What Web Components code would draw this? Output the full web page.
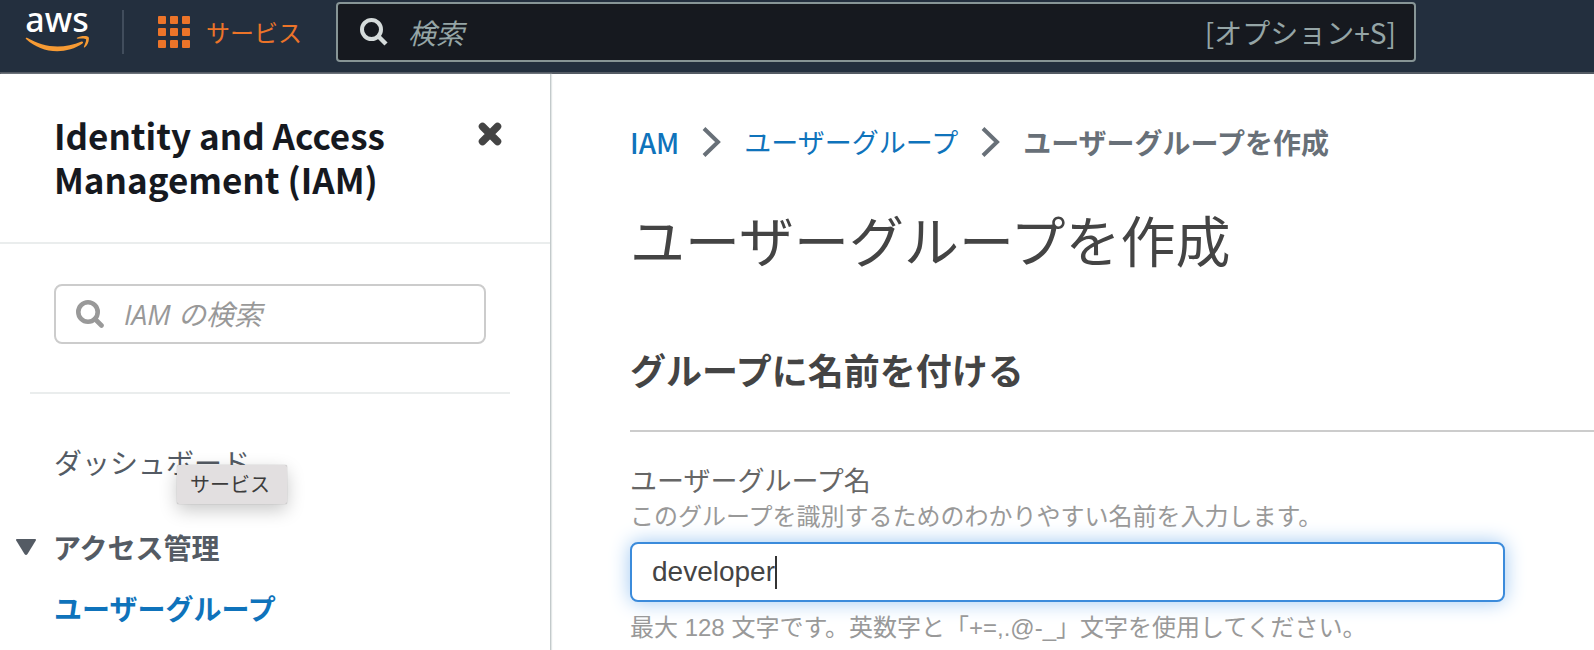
<!DOCTYPE html>
<html lang="ja">
<head>
<meta charset="utf-8">
<meta name="viewport" content="width=device-width, initial-scale=1">
<title>ユーザーグループを作成 | IAM</title>
<style>
  html, body { height: 100%; }
  body {
    margin: 0;
    overflow: hidden;
    background: #fff;
    color: #444;
    font-family: "Noto Sans CJK JP", "Noto Sans", sans-serif;
    font-size: 28px;
    line-height: 40px;
  }
</style>
</head>
<body>
<iam-console></iam-console>

<script>
function define(name, html) {
  const template = document.createElement('template');
  template.innerHTML = html;
  customElements.define(name, class extends HTMLElement {
    constructor() {
      super();
      this.attachShadow({ mode: 'open' }).append(template.content.cloneNode(true));
    }
  });
}

define('aws-logo', `
  <style>
    :host { display: block; width: 64px; height: 44px; }
    svg { display: block; overflow: visible; }
    text { font: 500 34px "Noto Sans", sans-serif; fill: #fff; }
  </style>
  <svg width="64" height="44" viewBox="0 0 64 44">
    <text x="33" y="22" text-anchor="middle">aws</text>
    <path fill="#f79b34" d="M1.800 28.100c.4-.6 1-.4 1.700 0C12.500 33.200 23 36.600 33.500 36.600c8 0 16-1.600 24-5 1.300-.5 2.300.9 1 1.900C51.500 38.600 41.800 41.200 33.300 41.200c-12 0-22.800-4.600-31-12-.5-.4-.8-.7-.5-1.100z"/>
    <path fill="#f79b34" d="M53 27.800c3.200-1.900 7.800-2.100 10.600-1.400 1 .2 1.400 1.100 1.300 2.600-.2 3.400-1.700 6.300-4 8.300-.7.500-1.300.2-1-.5 1-2.500 2.700-6.600 2.100-7.600-.7-1.100-5.400-.9-8.300-.5-.9.100-1.300-.5-.7-.9z"/>
  </svg>
`);

define('console-nav', `
  <style>
    :host {
      display: flex; align-items: center; box-sizing: border-box;
      height: 74px; padding: 0 24px 8px;
      background: #232f3e; border-bottom: 2px solid #545b64;
    }
    .rule { width: 2px; height: 44px; margin: 0 34px; background: #414d5c; }
    button {
      display: flex; align-items: center; gap: 16px; padding: 0; border: 0;
      background: none; color: #ec7429; font: inherit; font-size: 24px; line-height: 32px;
    }
    svg { display: block; flex: none; }
    label {
      flex: 0 1 1080px; display: flex; align-items: center; box-sizing: border-box;
      height: 60px; margin-left: 34px; padding: 0 18px 0 22px;
      border: 2px solid #879596; border-radius: 4px; background: #16191f; color: #95a5a6;
    }
    input {
      flex: 1; min-width: 0; padding: 0; margin-left: 20px; border: 0; outline: 0;
      background: none; color: inherit; font: inherit;
    }
    input::placeholder { color: #95a5a6; opacity: 1; font-style: italic; }
    .key { white-space: nowrap; }
  </style>
  <aws-logo></aws-logo>
  <div class="rule"></div>
  <button type="button">
    <svg width="32" height="32" viewBox="0 0 32 32" fill="currentColor">
      <rect width="8" height="8" rx="1"/><rect x="12" width="8" height="8" rx="1"/><rect x="24" width="8" height="8" rx="1"/>
      <rect y="12" width="8" height="8" rx="1"/><rect x="12" y="12" width="8" height="8" rx="1"/><rect x="24" y="12" width="8" height="8" rx="1"/>
      <rect y="24" width="8" height="8" rx="1"/><rect x="12" y="24" width="8" height="8" rx="1"/><rect x="24" y="24" width="8" height="8" rx="1"/>
    </svg>
    <span>サービス</span>
  </button>
  <label>
    <svg width="28" height="28" viewBox="0 0 28 28" fill="none" stroke="#d5dbdb">
      <circle cx="11.500" cy="11.500" r="9.500" stroke-width="4"/><path d="M18 18l8 8" stroke-width="4.500"/>
    </svg>
    <input type="search" placeholder="検索" aria-label="検索">
    <span class="key">[オプション+S]</span>
  </label>
`);

define('side-nav', `
  <style>
    :host {
      display: flex; flex-direction: column; box-sizing: border-box; width: 551px; flex: none;
      border-right: 1px solid #c3cacb; box-shadow: 1px 0 1px #e3e7e7;
    }
    header {
      display: flex; justify-content: space-between; align-items: flex-start;
      padding: 39px 48px 41px 54px; border-bottom: 2px solid #eaeded;
    }
    h2 { margin: 0; font-size: 35px; line-height: 44px; font-weight: 700; color: #16191f; }
    header button { display: block; padding: 9px 0; border: 0; background: none; }
    svg { display: block; flex: none; }
    label {
      display: flex; align-items: center; box-sizing: border-box; height: 60px;
      margin: 40px 64px 48px 54px; padding: 0 20px; border: 2px solid #ccc; border-radius: 8px;
    }
    input {
      flex: 1; min-width: 0; padding: 0; margin-left: 20px; border: 0; outline: 0;
      background: none; color: #444; font: inherit; font-family: "Open Sans", "Noto Sans CJK JP", sans-serif;
    }
    input::placeholder { color: #999; opacity: 1; font-style: italic; }
    hr { width: 480px; height: 2px; margin: 0 0 0 30px; border: 0; background: #eaeded; }
    nav { display: flex; flex-direction: column; padding: 48px 16px 0; color: #545b64; }
    a { color: inherit; text-decoration: none; margin-left: 38px; }
    .group {
      display: flex; align-items: center; gap: 17px; margin: 45px 0 21px; padding: 0;
      border: 0; background: none; color: inherit; font: inherit; font-weight: 700;
    }
    .current { color: #0f73bb; font-weight: 700; }
  </style>
  <header>
    <h2>Identity and Access<br>Management (IAM)</h2>
    <button type="button" aria-label="閉じる">
      <svg width="24" height="24" viewBox="0 0 24 24" stroke="#444" stroke-width="7.500" stroke-linecap="round"><path d="M4.500 4.500l15 15M19.500 4.500l-15 15"/></svg>
    </button>
  </header>
  <label>
    <svg width="28" height="28" viewBox="0 0 28 28" fill="none" stroke="#999" stroke-linecap="round">
      <circle cx="12" cy="12" r="9.700" stroke-width="4.600"/><path d="M19 19l6.500 6.500" stroke-width="4.600"/>
    </svg>
    <input type="search" placeholder="IAM の検索" aria-label="IAM の検索">
  </label>
  <hr>
  <nav>
    <a href="#dashboard">ダッシュボード</a>
    <button type="button" class="group" aria-expanded="true">
      <svg width="20" height="16" viewBox="0 0 20 16"><path fill="currentColor" d="M1 0h18q1.500 0 .8 1.500L11.500 15q-1.500 2-3 0L.2 1.500Q-.5 0 1 0z"/></svg>
      <span>アクセス管理</span>
    </button>
    <a class="current" href="#groups">ユーザーグループ</a>
  </nav>
`);

define('bread-crumbs', `
  <style>
    :host { display: block; }
    nav { display: flex; align-items: center; gap: 23px; }
    a { color: #0f73bb; text-decoration: none; font-size: 27px; }
    .root { font-size: 28px; font-weight: 500; }
    .here { color: #687078; font-weight: 700; }
    svg { display: block; flex: none; }
  </style>
  <nav aria-label="パンくずリスト">
    <a class="root" href="#iam">IAM</a>
    <svg width="19" height="30" viewBox="0 0 19 30" fill="none" stroke="#687078" stroke-width="4"><path d="M2 1.500L16 15 2 28.500"/></svg>
    <a href="#groups">ユーザーグループ</a>
    <svg width="19" height="30" viewBox="0 0 19 30" fill="none" stroke="#687078" stroke-width="4"><path d="M2 1.500L16 15 2 28.500"/></svg>
    <span class="here">ユーザーグループを作成</span>
  </nav>
`);

define('name-field', `
  <style>
    :host { display: block; margin-right: 89px; }
    label { display: block; padding-bottom: 1px; font-size: 27px; color: #666; }
    p { margin: 0; font-family: "Liberation Sans", "Noto Sans CJK JP", sans-serif; font-size: 24px; line-height: 32px; color: #999; white-space: nowrap; }
    .box {
      display: flex; align-items: center; box-sizing: border-box; height: 60px;
      margin: 9px 0 10px; padding: 0 20px; background: #fff;
      border: 2px solid #3b8bdb; border-radius: 8px; box-shadow: 0 0 20px #9fc8f2;
    }
    input {
      field-sizing: content; max-width: 100%; padding: 0; border: 0; outline: 0; background: none;
      color: #444; font-family: "Liberation Sans", sans-serif; font-size: 28px; line-height: 32px;
    }
    .caret { width: 2px; height: 33px; background: #333; }
  </style>
  <label for="name">ユーザーグループ名</label>
  <p id="hint">このグループを識別するためのわかりやすい名前を入力します。</p>
  <div class="box"><input id="name" type="text" value="developer" aria-describedby="hint rule"><span class="caret"></span></div>
  <p id="rule">最大 128 文字です。英数字と「+=,.@-_」文字を使用してください。</p>
`);

define('create-group', `
  <style>
    :host { display: block; flex: 1; min-width: 0; padding: 48px 0 0 79px; }
    h1 { margin: 36px 0 0; font-size: 55px; line-height: 80px; font-weight: 400; color: #444; }
    h2 { margin: 66px 0 0; padding-bottom: 36px; font-size: 36px; line-height: 50px; font-weight: 700; border-bottom: 2px solid #ccc; }
    name-field { margin-top: 28px; }
  </style>
  <bread-crumbs></bread-crumbs>
  <h1>ユーザーグループを作成</h1>
  <h2>グループに名前を付ける</h2>
  <name-field></name-field>
`);

define('tool-tip', `
  <style>
    :host {
      position: absolute; left: 177px; top: 465px; padding: 4px 17px 5px 13px;
      background: #e2dfe0; color: #3c3c3c; border-radius: 2px; font-size: 20px; line-height: 30px;
      box-shadow: 0 0 1px #888, 0 6px 18px rgba(0, 0, 0, .22);
    }
  </style>
  <slot></slot>
`);

define('iam-console', `
  <style>
    :host { display: flex; flex-direction: column; min-height: 100%; }
    main { display: flex; flex: 1; }
  </style>
  <console-nav></console-nav>
  <main>
    <side-nav></side-nav>
    <create-group></create-group>
  </main>
  <tool-tip role="tooltip">サービス</tool-tip>
`);
</script>
</body>
</html>
